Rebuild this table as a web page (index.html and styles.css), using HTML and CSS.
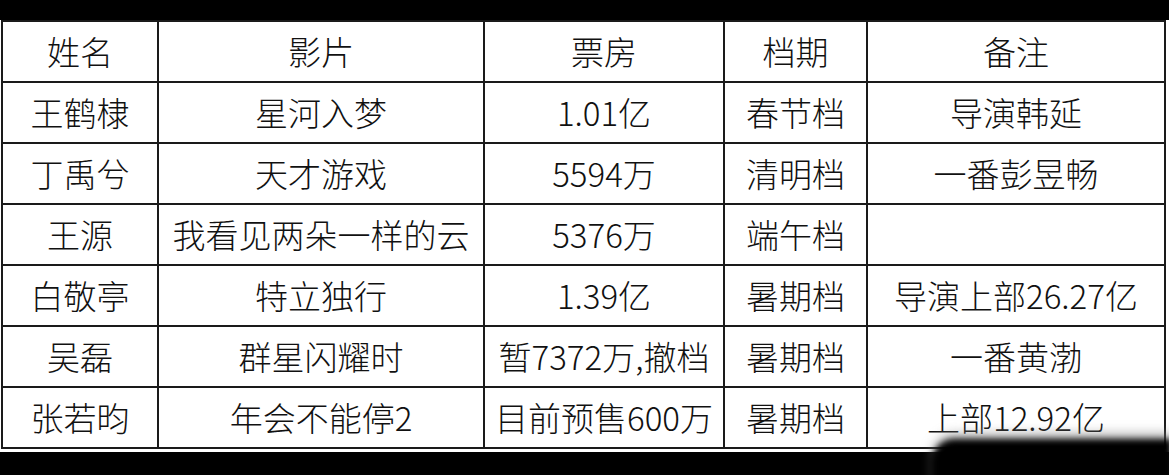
FILE: index.html
```html
<!DOCTYPE html>
<html lang="zh-CN">
<head>
<meta charset="utf-8">
<link rel="stylesheet" href="styles.css">
</head>
<body>
<div class="page">
  <div class="band-top"></div>
  <table class="grid">
    <colgroup>
      <col class="c1"><col class="c2"><col class="c3"><col class="c4"><col class="c5">
    </colgroup>
    <tr><td>姓名</td><td>影片</td><td>票房</td><td>档期</td><td>备注</td></tr>
    <tr><td>王鹤棣</td><td>星河入梦</td><td>1.01亿</td><td>春节档</td><td>导演韩延</td></tr>
    <tr><td>丁禹兮</td><td>天才游戏</td><td>5594万</td><td>清明档</td><td>一番彭昱畅</td></tr>
    <tr><td>王源</td><td>我看见两朵一样的云</td><td>5376万</td><td>端午档</td><td></td></tr>
    <tr><td>白敬亭</td><td>特立独行</td><td>1.39亿</td><td>暑期档</td><td>导演上部26.27亿</td></tr>
    <tr><td>吴磊</td><td>群星闪耀时</td><td>暂7372万,撤档</td><td>暑期档</td><td>一番黄渤</td></tr>
    <tr><td>张若昀</td><td>年会不能停2</td><td>目前预售600万</td><td>暑期档</td><td>上部12.92亿</td></tr>
  </table>
  <div class="band-bottom"></div>
  <div class="mark"></div>
</div>
</body>
</html>
```
FILE: styles.css
```css
html, body {
  margin: 0;
  padding: 0;
  background: #fff;
}
.page {
  position: relative;
  width: 1169px;
  height: 475px;
  overflow: hidden;
  background: #fff;
  display: flex;
  flex-direction: column;
}
.band-top {
  height: 20px;
  background: #000;
  flex: none;
}
.grid {
  margin-left: 1px;
  width: 1165px;
  border-collapse: collapse;
  table-layout: fixed;
  font-family: "Noto Sans CJK SC", "Noto Sans", sans-serif;
  font-weight: 300;
  font-size: 33px;
  color: #111;
  flex: none;
}
.c1 { width: 156px; }
.c2 { width: 326px; }
.c3 { width: 240px; }
.c4 { width: 143px; }
.c5 { width: 298px; }
.grid td {
  border: 2px solid #1a1a1a;
  height: 59px;
  padding: 0;
  text-align: center;
  vertical-align: middle;
  line-height: 1;
  white-space: nowrap;
}
.band-bottom {
  flex: 1;
  margin-top: 3px;
  background: #000;
}
.mark {
  position: absolute;
  left: 932px;
  top: 439px;
  width: 240px;
  height: 50px;
  background: #000;
  border-radius: 22px 0 0 0;
  filter: blur(3px);
  box-shadow: 0 -6px 8px rgba(140, 140, 140, 0.6);
}
```
